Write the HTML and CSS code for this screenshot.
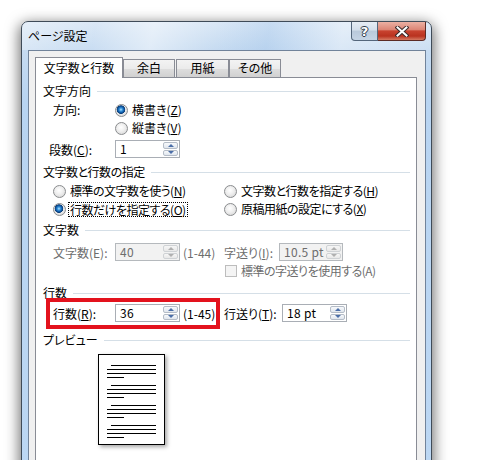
FILE: index.html
```html
<!DOCTYPE html>
<html lang="ja">
<head>
<meta charset="utf-8">
<title>ページ設定</title>
<link rel="stylesheet" href="styles.css">
</head>
<body>
<div class="stage">
  <div class="window">
    <div class="titlebar">
      <span class="title">ページ設定</span>
      <div class="caption">
        <div class="cbtn help"><span>?</span></div>
        <div class="cbtn close">
          <svg width="14" height="11" viewBox="0 0 14 11"><path d="M2.5 1.5 L11.5 9.5 M11.5 1.5 L2.5 9.5" stroke="#3a2b2b" stroke-width="4" stroke-linecap="square"/><path d="M2.5 1.5 L11.5 9.5 M11.5 1.5 L2.5 9.5" stroke="#ffffff" stroke-width="2" stroke-linecap="square"/></svg>
        </div>
      </div>
    </div>
    <div class="client">
      <div class="tabs">
        <div class="tab active">文字数と行数</div>
        <div class="tab t2">余白</div>
        <div class="tab t3">用紙</div>
        <div class="tab t4">その他</div>
      </div>
      <div class="panel">
        <div class="grp g1"><span>文字方向</span><i class="rule"></i></div>
        <div class="row r-dir">
          <span class="lbl">方向:</span>
          <span class="radio on"></span><span>横書き(<u>Z</u>)</span>
        </div>
        <div class="row r-vert">
          <span class="radio"></span><span>縦書き(<u>V</u>)</span>
        </div>
        <div class="row r-cols">
          <span class="lbl lbl-c">段数(<u>C</u>):</span>
          <div class="spin"><span class="val">1</span><span class="btns"><b class="up"></b><b class="dn"></b></span></div>
        </div>

        <div class="grp g2"><span class="narrow">文字数と行数の指定</span><i class="rule"></i></div>
        <div class="row r-opt1">
          <div class="col1"><span class="radio"></span><span class="narrow">標準の文字数を使う(<u>N</u>)</span></div>
          <div class="col2"><span class="radio"></span><span class="narrow">文字数と行数を指定する(<u>H</u>)</span></div>
        </div>
        <div class="row r-opt2">
          <div class="col1"><span class="radio on tight"></span><span class="focus narrow">行数だけを指定する(<u>O</u>)</span></div>
          <div class="col2"><span class="radio"></span><span class="narrow">原稿用紙の設定にする(<u>X</u>)</span></div>
        </div>

        <div class="grp g3"><span>文字数</span><i class="rule"></i></div>
        <div class="row r-chars dis">
          <span class="lbl">文字数(E):</span>
          <div class="spin off"><span class="val">40</span><span class="btns"><b class="up"></b><b class="dn"></b></span></div>
          <span class="range">(1-44)</span>
          <span class="lbl2 w55">字送り(<u>I</u>):</span>
          <div class="spin off w64"><span class="val">10.5 pt</span><span class="btns"><b class="up"></b><b class="dn"></b></span></div>
        </div>
        <div class="row r-chk dis">
          <span class="check"></span><span class="narrow">標準の字送りを使用する(A)</span>
        </div>

        <div class="grp g4"><span>行数</span><i class="rule"></i></div>
        <div class="row r-lines">
          <span class="lbl">行数(<u>R</u>):</span>
          <div class="spin"><span class="val">36</span><span class="btns"><b class="up"></b><b class="dn"></b></span></div>
          <span class="range">(1-45)</span>
          <span class="lbl2 w58">行送り(<u>T</u>):</span>
          <div class="spin"><span class="val">18 pt</span><span class="btns"><b class="up"></b><b class="dn"></b></span></div>
          <div class="mark"></div>
        </div>

        <div class="grp g5"><span>プレビュー</span><i class="rule"></i></div>
        <div class="page">
          <div class="para"><i class="ln first"></i><i class="ln"></i><i class="ln"></i><i class="ln last"></i></div>
          <div class="para"><i class="ln first"></i><i class="ln"></i><i class="ln"></i><i class="ln last"></i></div>
          <div class="para"><i class="ln first"></i><i class="ln"></i><i class="ln"></i><i class="ln last"></i></div>
          <div class="para"><i class="ln first"></i><i class="ln"></i><i class="ln"></i><i class="ln last"></i></div>
        </div>
      </div>
    </div>
  </div>
</div>
</body>
</html>
```

FILE: styles.css
```css
* { box-sizing: border-box; }
html, body { margin: 0; padding: 0; background: #ffffff; }
body {
  font-family: "Noto Sans CJK JP", "Noto Sans", sans-serif;
  font-size: 12px;
  line-height: 17px;
  color: #000;
  font-feature-settings: "palt";
  white-space: nowrap;
}
u { text-decoration: underline; text-underline-offset: 1px; }
i, b { font-style: normal; font-weight: normal; display: block; }
.narrow { letter-spacing: -0.5px; }

.stage {
  width: 485px;
  height: 460px;
  overflow: hidden;
  padding: 21px 0 0 21px;
}

.window {
  width: 411px;
  height: 460px;
  border: 1px solid #3f4b58;
  border-radius: 7px 7px 0 0;
  background: linear-gradient(to bottom, #d9e7f6 0px, #c6dbf1 28px, #b8d4f1 80px, #bcd7f3 100%);
  box-shadow: 0 4px 14px 2px rgba(0, 0, 0, 0.55);
  display: flex;
  flex-direction: column;
  padding: 0 5px 0 6px;
}

.titlebar {
  height: 28px;
  display: flex;
  justify-content: space-between;
  align-items: flex-start;
  margin: 0 -5px 0 -6px;
  padding: 0 5px 0 6px;
  border-radius: 6px 6px 0 0;
  background: linear-gradient(100deg,
    rgba(255,255,255,0.35) 0%,
    rgba(255,255,255,0.05) 18%,
    rgba(255,255,255,0.45) 32%,
    rgba(255,255,255,0.0) 48%,
    rgba(120,170,225,0.18) 60%,
    rgba(255,255,255,0.35) 78%,
    rgba(255,255,255,0.1) 100%);
}
.title { padding-top: 5px; color: #000; }

.caption { display: flex; }
.cbtn {
  height: 19px;
  display: flex;
  align-items: center;
  justify-content: center;
}
.help {
  width: 27px;
  border: 1px solid #54667b;
  border-top: none;
  border-radius: 0 0 0 4px;
  background: linear-gradient(#e6edf5 0%, #d4dfeb 45%, #b9c9db 50%, #c5d4e5 100%);
}
.help span {
  font-family: "DejaVu Sans", sans-serif;
  font-weight: bold;
  font-size: 13px;
  line-height: 13px;
  color: #fff;
  text-shadow: 1px 0 0 #2f3b4a, -1px 0 0 #2f3b4a, 0 1px 0 #2f3b4a, 0 -1px 0 #2f3b4a;
}
.close {
  width: 48px;
  border: 1px solid #5b2b25;
  border-top: none;
  border-left: none;
  border-radius: 0 0 4px 0;
  background: linear-gradient(#ebb0a3 0%, #dc8676 42%, #c8432f 50%, #b9321f 78%, #d57a62 100%);
}

.client {
  flex: 1;
  border: 1px solid #71839a;
  border-bottom: none;
  background: #f0f0f0;
  padding: 6px 8px 0 6px;
  display: flex;
  flex-direction: column;
}

.tabs {
  height: 20px;
  display: flex;
  align-items: flex-end;
}
.tab {
  height: 18px;
  border: 1px solid #898c95;
  border-bottom: none;
  background: linear-gradient(#f3f3f3 0%, #ebebeb 50%, #dedede 51%, #d1d1d1 100%);
  text-align: center;
  line-height: 16px;
}
.tab.active {
  width: 88px;
  height: 21px;
  margin-bottom: -1px;
  position: relative;
  z-index: 2;
  background: #fff;
  line-height: 17px;
  padding-top: 1px;
}
.t2 { width: 52px; }
.t3 { width: 53px; margin-left: 1px; }
.t4 { width: 52px; }

.panel {
  flex: 1;
  border: 1px solid #898c95;
  border-bottom: none;
  background: #fff;
  padding: 4px 6px 0 0;
}

.grp {
  display: flex;
  height: 17px;
  padding-left: 7px;
}
.rule {
  flex: 1;
  height: 1px;
  background: #d5dfe7;
  margin: 9px 0 0 6px;
}
.g2 { margin-top: 5px; }
.g3 { margin-top: 4px; }
.g4 { margin-top: 5px; }
.g5 { margin-top: 9px; }

.row {
  display: flex;
  align-items: center;
  height: 17px;
  padding-left: 17px;
}
.r-dir { margin-top: 2px; }
.r-vert { margin-top: 1px; padding-left: 79px; }
.r-cols { margin-top: 4px; height: 18px; padding-left: 13px; }
.r-opt1 { margin-top: 2px; }
.r-opt2 { margin-top: 1px; }
.r-chars { margin-top: 5px; height: 18px; }
.r-chk { margin-top: 1px; padding-left: 189px; }
.r-lines { margin-top: 3px; height: 18px; position: relative; }

.dis { color: #6d6d6d; }

.lbl { width: 62px; }
.lbl-c { width: 66px; }
.lbl2 { display: block; }
.w55 { width: 55px; }
.w58 { width: 58px; }
.range { margin-left: 3px; width: 41px; }

.col1 { width: 171px; display: flex; align-items: center; }
.col2 { display: flex; align-items: center; }

.radio {
  width: 13px;
  height: 13px;
  margin: 2px 4px 0 0;
  border-radius: 50%;
  border: 1px solid #8a8c8e;
  background: radial-gradient(circle at 45% 40%, #ffffff 0%, #eeeeee 45%, #cfcfcf 100%);
  flex: none;
}
.radio.on {
  background:
    radial-gradient(circle at 45% 42%, #b9e6ff 0px, #3b98e0 1.5px, #0f5aa6 3px, #0b3d78 4px, rgba(0,0,0,0) 4.6px),
    radial-gradient(circle at 45% 40%, #ffffff 0%, #eeeeee 45%, #cfcfcf 100%);
}
.radio.tight { margin-right: 2px; }
.focus {
  display: block;
  line-height: 13px;
  border: 1px dotted #000;
  padding: 0 1px;
  margin-top: 1px;
}

.check {
  width: 12px;
  height: 12px;
  margin: 1px 4px 0 0;
  border: 1px solid #bdbdbd;
  background: #f4f4f4;
  flex: none;
}

.spin {
  display: flex;
  width: 65px;
  height: 18px;
  border: 1px solid #a9aeb5;
  background: #fff;
  flex: none;
}
.spin.w64 { width: 64px; }
.spin .val {
  flex: 1;
  padding-left: 4px;
  line-height: 16px;
  letter-spacing: 0.3px;
}
.spin .btns {
  width: 16px;
  display: flex;
  flex-direction: column;
  gap: 1px;
  padding: 1px 1px 1px 0;
}
.spin .btns b {
  flex: 1;
  border: 1px solid #b4bcc7;
  border-radius: 2px;
  background: linear-gradient(#f7f9fb, #e0e6ee);
  display: flex;
  align-items: center;
  justify-content: center;
}
.spin .btns b::after {
  content: "";
  display: block;
  border-left: 3px solid transparent;
  border-right: 3px solid transparent;
}
.spin .btns .up::after { border-bottom: 3px solid #4b6ea8; }
.spin .btns .dn::after { border-top: 3px solid #4b6ea8; }
.spin.off { border-color: #b5b9bd; background: #f2f2f2; }
.spin.off .btns b { border-color: #cfd2d5; background: linear-gradient(#f6f6f6, #e8e8e8); }
.spin.off .btns .up::after { border-bottom-color: #b0b0b0; }
.spin.off .btns .dn::after { border-top-color: #b0b0b0; }

.mark {
  position: absolute;
  left: 10px;
  top: -6px;
  width: 174px;
  height: 31px;
  border: 4px solid #e3121d;
}

.page {
  margin: 6px 0 0 62px;
  width: 67px;
  height: 91px;
  border: 1px solid #000;
  background: #fff;
  box-shadow: 2px 2px 4px rgba(0, 0, 0, 0.35);
  padding: 10px 8px 0 8px;
}
.para {
  display: flex;
  flex-direction: column;
  gap: 3px;
  margin-bottom: 7px;
}
.ln { height: 1px; background: #000; }
.ln.first { margin-left: 4px; }
.ln.last { width: 17px; }
```
